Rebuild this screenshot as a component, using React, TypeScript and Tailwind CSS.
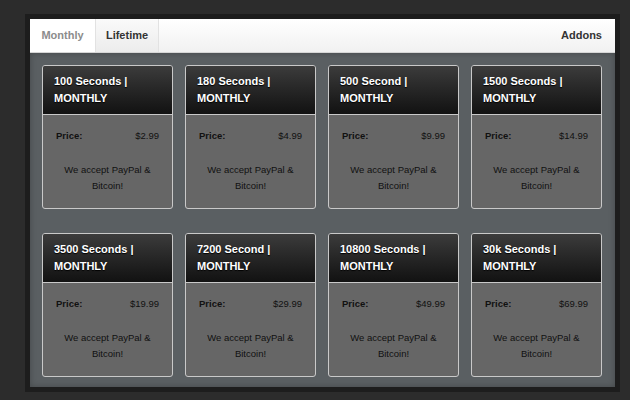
const plans = [
  { title: '100 Seconds |', price: '$2.99' },
  { title: '180 Seconds |', price: '$4.99' },
  { title: '500 Second |', price: '$9.99' },
  { title: '1500 Seconds |', price: '$14.99' },
  { title: '3500 Seconds |', price: '$19.99' },
  { title: '7200 Second |', price: '$29.99' },
  { title: '10800 Seconds |', price: '$49.99' },
  { title: '30k Seconds |', price: '$69.99' },
];

function PlanCard({ title, price }: { title: string; price: string }) {
  return (
    <div className="h-[144px] rounded-[3px] border border-[#c9c9c9] bg-[#666666] overflow-hidden">
      {/* Header */}
      <div className="h-[49px] border-b border-[#c9c9c9] bg-gradient-to-b from-[#3c3c3c] to-[#121212] px-[11px] pt-[7px] text-[11px] font-bold leading-[17px] text-white [text-shadow:0_1px_1px_#000]">
        <div>{title}</div>
        <div>MONTHLY</div>
      </div>
      {/* Body */}
      <div className="px-[13px] pt-[13px] text-[9.5px] leading-[16px] text-[#111]">
        <div className="flex justify-between">
          <span className="font-bold">Price:</span>
          <span>{price}</span>
        </div>
        <div className="mt-[18px] text-center">
          <div>We accept PayPal &amp;</div>
          <div>Bitcoin!</div>
        </div>
      </div>
    </div>
  );
}

export default function App() {
  return (
    <div
      className="h-[400px] w-full bg-[#2c2c2c] pt-[14px] pl-[25px]"
      style={{ fontFamily: '"Liberation Sans", Arial, sans-serif' }}
    >
      <div className="w-[595px] bg-[#1d1d1d] p-[5px]">
        {/* Tabs */}
        <div className="flex h-[34px] items-stretch border-b border-[#d6d6d6] bg-gradient-to-b from-white to-[#f1f1f1] text-[11px] font-bold">
          <div className="flex w-[66px] items-center justify-center border-r border-[#e2e2e2] bg-white text-[#8c8c8c]">
            Monthly
          </div>
          <div className="flex w-[63px] items-center justify-center border-r border-[#e2e2e2] bg-gradient-to-b from-[#fafafa] to-[#ececec] text-[#333]">
            Lifetime
          </div>
          <div className="flex flex-1 items-center justify-end pr-[13px] text-[#333]">Addons</div>
        </div>
        {/* Panel */}
        <div className="grid h-[334px] grid-cols-4 content-start gap-x-[12px] gap-y-[24px] bg-[#5a5f62] pt-[12px] pl-[12px] pr-[13px] shadow-[inset_0_0_6px_rgba(0,0,0,0.25)]">
          {plans.map((p) => (
            <PlanCard key={p.title} title={p.title} price={p.price} />
          ))}
        </div>
      </div>
    </div>
  );
}
